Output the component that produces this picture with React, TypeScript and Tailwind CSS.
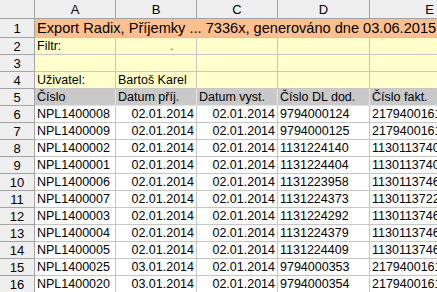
import React from 'react'

const cols = ['A', 'B', 'C', 'D', 'E']

const rows = [
  ['NPL1400008', '02.01.2014', '02.01.2014', '9794000124', '21794001615'],
  ['NPL1400009', '02.01.2014', '02.01.2014', '9794000125', '21794001616'],
  ['NPL1400002', '02.01.2014', '02.01.2014', '1131224140', '11301137402'],
  ['NPL1400001', '02.01.2014', '02.01.2014', '1131224404', '11301137403'],
  ['NPL1400006', '02.01.2014', '02.01.2014', '1131223958', '11301137461'],
  ['NPL1400007', '02.01.2014', '02.01.2014', '1131224373', '11301137224'],
  ['NPL1400003', '02.01.2014', '02.01.2014', '1131224292', '11301137462'],
  ['NPL1400004', '02.01.2014', '02.01.2014', '1131224379', '11301137463'],
  ['NPL1400005', '02.01.2014', '02.01.2014', '1131224409', '11301137464'],
  ['NPL1400025', '03.01.2014', '02.01.2014', '9794000353', '21794001617'],
  ['NPL1400020', '03.01.2014', '02.01.2014', '9794000354', '21794001618'],
]

const hdr = 'border-r border-b border-[#a3a3a3] bg-[#efefef] flex items-center justify-center text-[13px]'
const cell = 'border-r border-b border-[#c6c6c6] flex items-center px-[2px] overflow-hidden whitespace-nowrap'

function RowHead({ n }: { n: number }) {
  return <div className={hdr}>{n}</div>
}

export default function App() {
  return (
    <div
      className="w-[437px] h-[292px] overflow-hidden bg-white text-black text-[12.5px] leading-none"
      style={{ fontFamily: '"Liberation Sans", Arial, sans-serif' }}
    >
      <div className="grid grid-cols-[35px_81px_81px_81px_92px_120px] grid-rows-[19px_19px_17px_17px_17px_17px] auto-rows-[17px]">
        {/* column headers */}
        <div className={hdr} />
        {cols.map(c => (
          <div key={c} className={hdr}>{c}</div>
        ))}

        {/* 1: title */}
        <RowHead n={1} />
        <div className="col-span-5 border-b border-[#c6c6c6] bg-[#fcc08f] flex items-center px-[2px] whitespace-nowrap overflow-hidden text-[14.6px]">
          Export Radix, Příjemky ... 7336x, generováno dne 03.06.2015 v 10:15
        </div>

        {/* 2: filter */}
        <RowHead n={2} />
        <div className={`${cell} bg-[#ffffcc]`}>Filtr:</div>
        <div className={`${cell} bg-[#ffffcc] pl-[54px] text-red-600`}>.</div>
        <div className={`${cell} bg-[#ffffcc]`} />
        <div className={`${cell} bg-[#ffffcc]`} />
        <div className={`${cell} bg-[#ffffcc]`} />

        {/* 3 */}
        <RowHead n={3} />
        {cols.map(c => (
          <div key={c} className={`${cell} bg-[#ffffcc]`} />
        ))}

        {/* 4: user */}
        <RowHead n={4} />
        <div className={`${cell} bg-[#ffffcc]`}>Uživatel:</div>
        <div className={`${cell} bg-[#ffffcc]`}>Bartoš Karel</div>
        <div className={`${cell} bg-[#ffffcc]`} />
        <div className={`${cell} bg-[#ffffcc]`} />
        <div className={`${cell} bg-[#ffffcc]`} />

        {/* 5: column titles */}
        <RowHead n={5} />
        {['Číslo', 'Datum příj.', 'Datum vyst.', 'Číslo DL dod.', 'Číslo fakt.'].map(t => (
          <div key={t} className="border-r border-b border-[#e2e2e2] bg-[#c9c9c9] flex items-center px-[2px] whitespace-nowrap overflow-hidden">
            {t}
          </div>
        ))}

        {/* data */}
        {rows.map((r, i) => (
          <React.Fragment key={r[0]}>
            <RowHead n={i + 6} />
            <div className={cell}>{r[0]}</div>
            <div className={`${cell} justify-end`}>{r[1]}</div>
            <div className={`${cell} justify-end`}>{r[2]}</div>
            <div className={cell}>{r[3]}</div>
            <div className={cell}>{r[4]}</div>
          </React.Fragment>
        ))}
      </div>
    </div>
  )
}
